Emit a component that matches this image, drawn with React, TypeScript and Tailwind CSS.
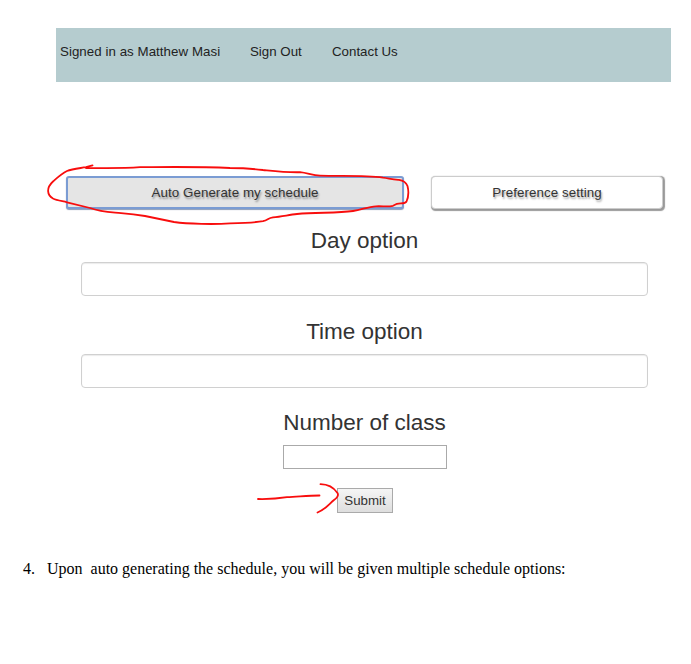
import type { ReactNode } from 'react';

function Heading({ children }: { children: ReactNode }) {
  return <h2 className="h-[30px] text-center text-[22.5px] leading-[30px] text-[#333]">{children}</h2>;
}

function TextBox() {
  return (
    <input className="block h-[34px] w-full rounded-[4px] border border-[#d0d0d0] bg-white px-3 shadow-[inset_0_1px_1px_rgba(0,0,0,0.08)] outline-none" />
  );
}

function Annotations() {
  return (
    <svg
      className="pointer-events-none absolute left-0 top-0"
      width="691"
      height="664"
      viewBox="0 0 691 664"
      fill="none"
      stroke="#f80d0d"
      strokeWidth="1.8"
      strokeLinecap="round"
      strokeLinejoin="round"
    >
      <path d="M92.5 165.3 L86 167.2 C78 168.5 72 169 67 171 C61 174 57 178 53 181.500 C46 188 47 195 53 198.500 C57 200.500 62 201 67 202.300 L90 208 C101 212 108 212 121 213.200 C132 214 139 215 145 216 L174 222 C188 224 214 224.500 230 223.400 C243 223 256 222.500 263 221.200 C268 220 268 218 273 217.300 C282 216.500 289 214.800 297 214 C316 212 337 213.500 353 211 C362 209.500 368 207 376 206.300 C383 206 388 207 393 205.800 L397 203.800 C401 203 405 204.200 406.500 201.500 C408.500 197 408.500 190 407.500 186 C406 182 404 180.500 399 179.800 C392 180 389 178.300 383 177.700 C364 175 339 176.500 320 175.700 C312 175.500 308 173 300 172.200 C285 172.500 273 171 263 170 C251 168.500 240 168 230 168 C199 166.500 170 167 140 167.200 C122 168.500 107 168 86 168" />
      <path d="M258 499 C268 499.200 279 498.500 287 497.200 C298 496.800 308 495.500 319.500 495.500" />
      <path d="M320.500 484.200 C328 484.300 334 488 337.500 493 C339 495.500 336.500 498.500 334 500 C329 504 326 509 317.500 512.500" />
    </svg>
  );
}

export default function App() {
  return (
    <div className="relative h-[664px] w-[691px] overflow-hidden bg-white pt-7 font-['Liberation_Sans',Arial,sans-serif]">
      <nav className="ml-14 flex h-[54px] w-[615px] bg-[#b5cccf] pl-1 pt-[14px] text-[13.3px] leading-5 text-[#222]">
        <a className="w-[190px] whitespace-nowrap tracking-[0.05px]">Signed in as Matthew Masi</a>
        <a className="w-[82px] whitespace-nowrap">Sign Out</a>
        <a className="whitespace-nowrap">Contact Us</a>
      </nav>

      <div className="ml-[66px] mt-[94px] flex gap-[27px] text-[13.3px] text-[#333]">
        <button className="h-[33px] w-[338px] rounded-[3px] border-2 border-[#7b9cd3] bg-[#e5e5e5] tracking-[0.08px] shadow-[0_1px_1px_#8b9cb8] [text-shadow:1px_2px_2px_rgba(0,0,0,0.4)]">
          Auto Generate my schedule
        </button>
        <button className="h-[33px] w-[232px] rounded-[4px] border border-[#ccc] bg-white tracking-[0.08px] shadow-[1px_1px_1px_0.5px_#999] [text-shadow:1px_2px_2px_rgba(0,0,0,0.4)]">
          Preference setting
        </button>
      </div>

      <main className="ml-[81px] mt-[17px] w-[567px]">
        <Heading>Day option</Heading>
        <div className="mt-[6px]"><TextBox /></div>
        <div className="mt-[21px]"><Heading>Time option</Heading></div>
        <div className="mt-[7px]"><TextBox /></div>
        <div className="mt-[20px]"><Heading>Number of class</Heading></div>
        <input className="ml-[202px] mt-[7px] block h-[24px] w-[164px] border border-[#aaa] bg-white outline-none" />
        <button className="ml-[256px] mt-[19px] block h-[25px] w-[56px] border border-[#aaa] bg-gradient-to-b from-[#f5f5f5] to-[#dedede] text-[13.3px] leading-5 text-[#333]">
          Submit
        </button>
      </main>

      <div className="ml-[23px] mt-[46px] flex whitespace-pre font-['Liberation_Serif','Times_New_Roman',serif] text-[16px] leading-5 text-black">
        <span className="w-6">4.</span>
        <p>Upon  auto generating the schedule, you will be given multiple schedule options:</p>
      </div>
      <Annotations />
    </div>
  );
}
